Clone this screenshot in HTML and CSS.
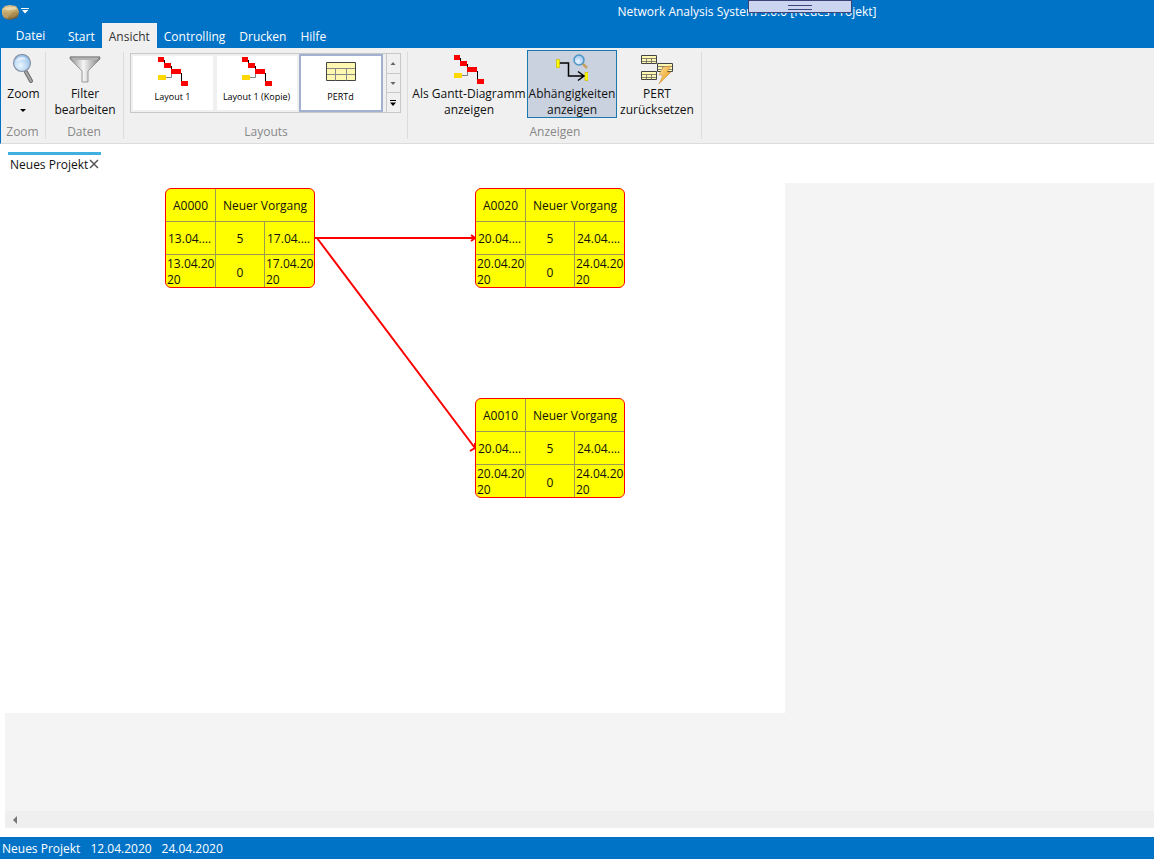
FILE: index.html
```html
<!DOCTYPE html>
<html lang="de">
<head>
<meta charset="utf-8">
<meta name="viewport" content="width=device-width, initial-scale=1">
<title>Network Analysis System</title>
<link rel="stylesheet" href="styles.css">
</head>
<body>
<svg class="defs" width="0" height="0" aria-hidden="true">
  <defs>
    <linearGradient id="metal" x1="0" x2="1"><stop offset="0" stop-color="#8d8d8d"/><stop offset=".45" stop-color="#f5f5f5"/><stop offset="1" stop-color="#808080"/></linearGradient>
    <radialGradient id="lens" cx=".4" cy=".65" r=".7"><stop offset="0" stop-color="#eef7ff"/><stop offset="1" stop-color="#8fbde8"/></radialGradient>
    <linearGradient id="bolt" x1="0" x2="1" y2="1"><stop offset="0" stop-color="#ffe7a0"/><stop offset=".6" stop-color="#f0b040"/><stop offset="1" stop-color="#c87820"/></linearGradient>
    <linearGradient id="stone" x1=".3" x2=".7" y2="1"><stop offset="0" stop-color="#d8c493"/><stop offset=".55" stop-color="#c5a868"/><stop offset="1" stop-color="#5f4b28"/></linearGradient>
    <symbol id="gantt" viewBox="0 0 32 32">
      <path d="M7 4v5M14 10v5M24 17v8" stroke="#000" stroke-width="1" transform="translate(.5 0)" fill="none"/>
      <path d="M8 21.500h6.500V17" stroke="#808080" fill="none"/>
      <path d="M1 1h6v5H1zM7 7h7v5H7zM14 13h10v5H14zM24 25h7v5h-7z" fill="#f00"/>
      <path d="M1 19h8v5H1z" fill="#ffd800"/>
    </symbol>
  </defs>
</svg>

<div class="app">
  <header class="titlebar">
    <svg class="logo" viewBox="0 0 18 18" aria-hidden="true"><path d="M1 6 4 3l5-1 6 1 2 3 1 3-1 5-4 2-5 1-5-2-2-4z" fill="url(#stone)"/><path d="M2 6l5-2 7 0 2 2-8 1.500z" fill="#e6d6ac"/><path d="M2 9l6 1-1 5-4-2z" fill="#bda06a"/><path d="M10 10l6-2-1 5-5 2z" fill="#ab8c50" opacity=".7"/></svg>
    <button class="quick" aria-label="Schnellzugriff anpassen"><svg viewBox="0 0 8 8"><path d="M0 .5h8" stroke="#fff"/><path d="M1 2h6.500L4 5.500z" fill="#fff"/></svg></button>
    <h1 class="title">Network Analysis System 5.0.0 [Neues Projekt]</h1>
    <div class="grip" aria-hidden="true"></div>
  </header>

  <nav class="tabs">
    <button class="tab file">Datei</button>
    <button class="tab">Start</button>
    <button class="tab active">Ansicht</button>
    <button class="tab">Controlling</button>
    <button class="tab">Drucken</button>
    <button class="tab">Hilfe</button>
  </nav>

  <section class="ribbon">
    <div class="group zoom">
      <div class="tools">
        <button class="tool">
          <svg class="icon" viewBox="0 0 32 32" aria-hidden="true"><path d="m19 18 5 9" stroke="#666" stroke-width="4" stroke-linecap="round"/><path d="m19 18 5 9" stroke="#aaa" stroke-width="2" stroke-linecap="round"/><circle cx="15" cy="9" r="8.500" fill="url(#lens)" stroke="#8790a5" stroke-width="1.200"/><path d="M9 8a6 6 0 0 1 11-2c-4-1-7 0-11 2z" fill="#fff" opacity=".6"/></svg>
          <span>Zoom</span><span class="arrow"></span>
        </button>
      </div>
      <div class="caption">Zoom</div>
    </div>

    <div class="group daten">
      <div class="tools">
        <button class="tool">
          <svg class="icon" viewBox="0 0 32 32" aria-hidden="true"><path d="M1 3h30v2L19 17v11h-6V17L1 5z" fill="url(#metal)" stroke="#858585" stroke-width=".8"/><path d="M2 3h28l-2 3H4z" fill="#b4b4b4"/><path d="M1 3h30" stroke="#808080"/></svg>
          <span>Filter<br>bearbeiten</span>
        </button>
      </div>
      <div class="caption">Daten</div>
    </div>

    <div class="group layouts">
      <div class="tools">
        <div class="gallery">
          <button class="layout"><svg class="icon"><use href="#gantt"/></svg><span>Layout 1</span></button>
          <button class="layout"><svg class="icon"><use href="#gantt"/></svg><span>Layout 1 (Kopie)</span></button>
          <button class="layout chosen"><svg class="icon" viewBox="0 0 32 32"><path d="M1.500 6.500h29v18h-29z" fill="#fff8b0" stroke="#444"/><path d="M2 12.500h28M2 18.500h28M10.500 12.500v12M21.500 12.500v12" stroke="#888" fill="none"/></svg><span>PERTd</span></button>
          <div class="scroller">
            <button aria-label="Nach oben"><svg viewBox="0 0 8 8"><path d="M1.500 6 4 3l2.500 3z" fill="#666"/></svg></button>
            <button aria-label="Nach unten"><svg viewBox="0 0 8 8"><path d="M1.500 3 4 6l2.500-3z" fill="#666"/></svg></button>
            <button aria-label="Mehr"><svg viewBox="0 0 8 8"><path d="M1 1.500h6" stroke="#000"/><path d="M1 3.500h6L4 7z" fill="#000"/></svg></button>
          </div>
        </div>
      </div>
      <div class="caption">Layouts</div>
    </div>

    <div class="group anzeigen">
      <div class="tools">
        <button class="tool gantt-tool"><svg class="icon"><use href="#gantt"/></svg><span>Als Gantt-Diagramm<br>anzeigen</span></button>
        <button class="tool pressed" aria-pressed="true">
          <svg class="icon" viewBox="0 0 32 32" aria-hidden="true"><path d="M3 9h9.500v13H29M22 17.500l6 4.500-6 4.500" stroke="#000" stroke-width="1.500" fill="none"/><path d="M.5 5.500h3v8h-3zM29 18.500h3v8h-3z" fill="#ff0" stroke="#c9b800" stroke-width=".7"/><path d="m26 9 5 5" stroke="#c8a060" stroke-width="2.500"/><circle cx="23" cy="6" r="5" fill="url(#lens)" stroke="#4e96c7" stroke-width="1.500"/></svg>
          <span>Abhängigkeiten<br>anzeigen</span>
        </button>
        <button class="tool reset-tool">
          <svg class="icon" viewBox="0 0 32 32" aria-hidden="true"><g fill="#fff8b0" stroke="#444"><path d="M.5 1.500h15v8H.5zM16.500 9.500h15v8h-15zM.5 17.500h15v8H.5z"/><path d="M1 4.500h14M1 7.500h14M5.500 4.500v5M10.500 4.500v5M17 12.500h14M17 15.500h14M21.500 12.500v5M26.500 12.500v5M1 20.500h14M1 23.500h14M5.500 20.500v5M10.500 20.500v5" fill="none" stroke="#666" stroke-width=".8"/></g><path d="m22 13 8-1-4 6h4L18 30l4-9h-4z" fill="url(#bolt)" stroke="#c9893a" stroke-width=".5"/></svg>
          <span>PERT<br>zurücksetzen</span>
        </button>
      </div>
      <div class="caption">Anzeigen</div>
    </div>
  </section>

  <main class="workspace">
    <div class="doc-tabs">
      <div class="doc-tab"><span>Neues Projekt</span><button aria-label="Schließen"><svg viewBox="0 0 10 10"><path d="m1 1 8 8m0-8-8 8" stroke="#555" stroke-width="1.500"/></svg></button></div>
    </div>
    <div class="viewport">
      <div class="canvas">
        <svg class="links" viewBox="0 0 780 530" aria-hidden="true">
          <path d="M310 55H470M312 55 470 265M466 52l4 3-4 3M470 260v5l-5 3" fill="none" stroke="#f00" stroke-width="2"/>
        </svg>
        <article class="node first">
          <div>A0000</div><div class="name">Neuer Vorgang</div>
          <div class="cut">13.04.…</div><div>5</div><div class="cut">17.04.…</div>
          <div class="wrap">13.04.2020</div><div>0</div><div class="wrap">17.04.2020</div>
        </article>
        <article class="node second">
          <div>A0020</div><div class="name">Neuer Vorgang</div>
          <div class="cut">20.04.…</div><div>5</div><div class="cut">24.04.…</div>
          <div class="wrap">20.04.2020</div><div>0</div><div class="wrap">24.04.2020</div>
        </article>
        <article class="node third">
          <div>A0010</div><div class="name">Neuer Vorgang</div>
          <div class="cut">20.04.…</div><div>5</div><div class="cut">24.04.…</div>
          <div class="wrap">20.04.2020</div><div>0</div><div class="wrap">24.04.2020</div>
        </article>
      </div>
    </div>
    <div class="hscroll"><button aria-label="Nach links"><svg viewBox="0 0 8 8"><path d="M6 0v8L2 4z" fill="#777"/></svg></button></div>
  </main>

  <footer class="status"><span>Neues Projekt</span><span>12.04.2020</span><span>24.04.2020</span></footer>
</div>
</body>
</html>
```

FILE: styles.css
```css
* { box-sizing: border-box; }
body {
  margin: 0;
  font: 12px/16px "Open Sans", "Noto Sans", sans-serif;
  color: #111;
}
button { font: inherit; color: inherit; background: none; border: 0; padding: 0; }
svg { display: block; }
.defs { position: absolute; }
.app { display: flex; flex-direction: column; min-height: 100vh; background: #fff; }

.titlebar { position: relative; display: flex; align-items: center; height: 23px; background: #0173c7; color: #fff; }
.logo { width: 18px; height: 18px; margin-left: 1px; }
.quick { width: 12px; display: flex; justify-content: center; }
.quick svg { width: 8px; height: 8px; }
.title { flex: 1; margin: 0; padding-left: 309px; font-size: 12px; font-weight: 400; text-align: center; white-space: nowrap; }
.grip { position: absolute; left: 748px; top: 0; width: 104px; height: 13px; background: #ccd5f0; border: 1px solid #3c4377; }
.grip::after { content: ""; display: block; width: 24px; height: 3px; margin: 4px auto; border: solid #3c4377; border-width: 1px 0; }

.tabs { display: flex; height: 25px; background: #0173c7; color: #fff; }
.tab { padding: 2px 7px 0; white-space: nowrap; }
.tab.file { width: 61px; padding-top: 0; }
.tab.active { background: #f0f0f0; color: #333; }

.ribbon { display: flex; height: 96px; background: #f0f0f0; border-left: 1px solid #0173c7; border-bottom: 1px solid #dcdcdc; }
.group { display: flex; flex-direction: column; padding-top: 2px; position: relative; }
.group::after { content: ""; position: absolute; right: 0; top: 4px; bottom: 4px; width: 1px; background: #dcdcdc; }
.group.zoom { width: 45px; }
.group.daten { width: 78px; }
.group.layouts { width: 284px; }
.group.anzeigen { width: 294px; }
.tools { display: flex; justify-content: center; height: 74px; }
.caption { text-align: center; color: #888; }
.zoom .caption, .daten .caption { padding-right: 2px; }
.layouts .tools, .anzeigen .tools { padding-right: 2px; }
.icon { width: 32px; height: 32px; flex: none; }
.tool { display: flex; flex-direction: column; align-items: center; height: 68px; padding-top: 3px; border: 1px solid transparent; white-space: nowrap; }
.tool.pressed { width: 90px; background: #cad1df; border-color: #1979ae; }
.gantt-tool { width: 116px; }
.reset-tool { width: 80px; }
.arrow { margin-top: 7px; border: solid transparent; border-width: 3px 3px 0; border-top-color: #000; }
.gallery { display: flex; height: 60px; margin-top: 3px; border: 1px solid #c8c8c8; }
.layout { display: flex; flex-direction: column; align-items: center; width: 80px; margin: 2px; font-size: 9px; line-height: 14px; background: #fff; color: #000; white-space: nowrap; }
.layout .icon { margin-bottom: 2px; }
.layout.chosen { width: 84px; margin: 0 3px 0 0; border: 2px solid #a2b1d0; }
.scroller { display: flex; flex-direction: column; width: 14px; border-left: 1px solid #c8c8c8; }
.scroller button { flex: 1; display: flex; align-items: center; justify-content: center; }
.scroller button + button { border-top: 1px solid #c8c8c8; }
.scroller svg { width: 8px; height: 8px; }

.workspace { flex: 1; display: flex; flex-direction: column; padding: 8px 0 9px 5px; }
.doc-tabs { display: flex; height: 31px; padding-left: 3px; }
.doc-tab { display: flex; align-items: flex-start; justify-content: space-between; width: 93px; height: 22px; padding: 2px 2px 0; border-top: 3px solid #40b0e0; white-space: nowrap; }
.doc-tab svg { width: 10px; height: 10px; margin-top: 2px; }
.viewport { flex: 1; background: #f4f4f4; overflow: hidden; }
.canvas { position: relative; width: 780px; height: 530px; background: #fff; }
.links { width: 100%; height: 100%; }
.hscroll { display: flex; align-items: center; height: 17px; background: #efefef; padding: 0 6px; }
.hscroll svg { width: 8px; height: 8px; }

.node {
  position: absolute;
  display: grid;
  grid-template-columns: 50px 49px 1fr;
  grid-template-rows: 33px 33px 1fr;
  width: 150px;
  height: 100px;
  background: #ff0;
  border: 1px solid #f00;
  border-radius: 6px;
  overflow: hidden;
}
.node > div { display: flex; align-items: center; justify-content: center; padding-top: 2px; border: solid #9c9c50; border-width: 0 1px 1px 0; white-space: nowrap; }
.node > .name { grid-column: span 2; border-right: 0; }
.node > .cut { justify-content: flex-start; padding-left: 2px; }
.node > .wrap { display: block; padding: 1px 0 0 1px; white-space: normal; word-break: break-all; }
.node > :nth-child(5), .node > :nth-child(8) { border-right: 0; }
.node > :nth-child(n+6) { border-bottom: 0; }
.first { left: 160px; top: 5px; }
.second { left: 470px; top: 5px; }
.third { left: 470px; top: 215px; }

.status { display: flex; align-items: center; gap: 10px; height: 22px; padding: 2px 2px 0; background: #0173c7; color: #fff; }
```
